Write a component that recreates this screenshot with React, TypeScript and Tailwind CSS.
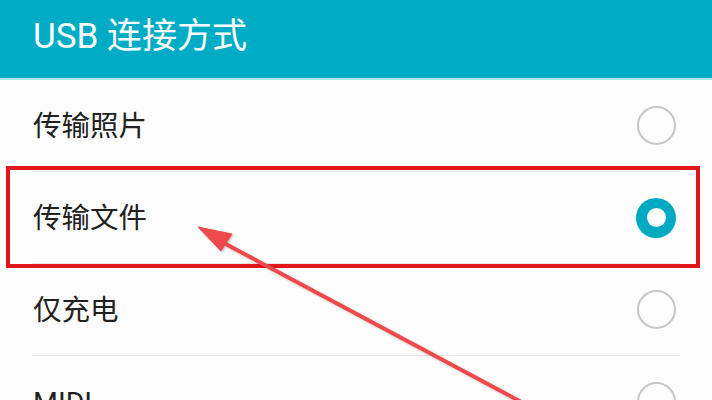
const rows = [
  { label: '传输照片', selected: false },
  { label: '传输文件', selected: true },
  { label: '仅充电', selected: false },
  { label: 'MIDI', selected: false },
];

const Radio = ({ selected }: { selected: boolean }) =>
  selected ? (
    <div className="w-[40px] h-[40px] rounded-full bg-[#00a9c2] flex items-center justify-center">
      <div className="w-[19px] h-[19px] rounded-full bg-white" />
    </div>
  ) : (
    <div className="w-[39px] h-[39px] rounded-full border-2 border-[#c6c6c6]" />
  );

const App = () => {
  return (
    <div
      className="relative w-full h-[400px] overflow-hidden bg-[#fdfdfd] text-[#212121]"
      style={{ fontFamily: "Roboto, 'Noto Sans CJK SC', sans-serif" }}
    >
      {/* Header */}
      <header className="h-[80px] bg-[#00acc5] border-b-2 border-[#a6e8ef] flex items-center px-[33px]">
        <h1 className="text-[35px] text-white font-normal leading-none -mt-[6px]">USB 连接方式</h1>
      </header>

      {/* Options */}
      <ul>
        {rows.map((row, i) => (
          <li key={row.label}>
            <div className="h-[91px] flex items-center justify-between pl-[33px] pr-[36px]">
              <span className="text-[28.5px] leading-none mt-[3px]">{row.label}</span>
              <Radio selected={row.selected} />
            </div>
            {i < rows.length - 1 && <div className="mx-[32px] h-px bg-[#e6e6e6]" />}
          </li>
        ))}
      </ul>

      {/* Highlight box */}
      <div className="absolute left-[6px] top-[166px] w-[694px] h-[102px] border-[4px] border-[#e0161a]" />

      {/* Arrow */}
      <svg className="absolute inset-0 pointer-events-none" width="712" height="400" viewBox="0 0 712 400">
        <defs>
          <filter id="sh" x="-10%" y="-10%" width="120%" height="120%">
            <feDropShadow dx="1" dy="1" stdDeviation="1" floodColor="#000" floodOpacity="0.25" />
          </filter>
        </defs>
        <g filter="url(#sh)" fill="#ef4a4c" stroke="#ef4a4c">
          <line x1="540" y1="412" x2="222" y2="242" strokeWidth="4" strokeLinecap="round" />
          <polygon points="198,227 232,234 221,251" strokeWidth="1" strokeLinejoin="round" />
        </g>
      </svg>
    </div>
  );
};

export default App;
